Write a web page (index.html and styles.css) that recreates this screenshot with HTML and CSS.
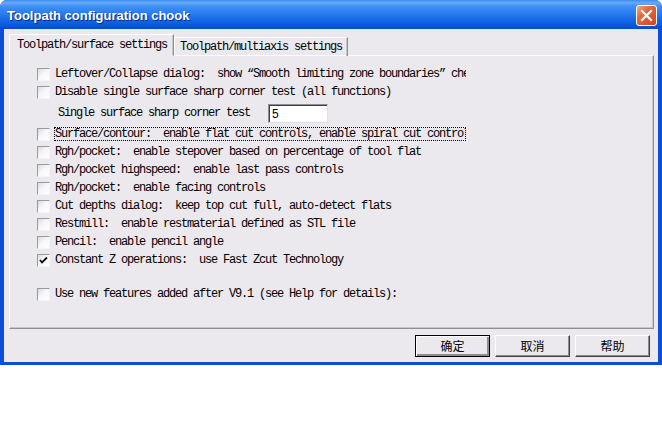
FILE: index.html
```html
<!DOCTYPE html>
<html>
<head>
<meta charset="utf-8">
<link rel="stylesheet" href="styles.css">
</head>
<body>
<div class="window">
  <div class="titlebar">
    <span class="title">Toolpath configuration chook</span>
    <span class="close">
      <svg width="21" height="21" viewBox="0 0 21 21"><path d="M6 6 L15 15 M15 6 L6 15" stroke="#fff" stroke-width="2.2" stroke-linecap="square"/></svg>
    </span>
  </div>
  <div class="body">
    <div class="tabs">
      <div class="tab active">Toolpath/surface settings</div>
      <div class="tab">Toolpath/multiaxis settings</div>
    </div>
    <div class="panel">
      <div class="row"><span class="cb"></span><span class="lbl">Leftover/Collapse dialog:  show “Smooth limiting zone boundaries” check box</span></div>
      <div class="row"><span class="cb"></span><span class="lbl">Disable single surface sharp corner test (all functions)</span></div>
      <div class="row inputrow"><span class="sub">Single surface sharp corner test</span><span class="field">5</span></div>
      <div class="row"><span class="cb"></span><span class="lbl focus">Surface/contour:  enable flat cut controls, enable spiral cut controls</span></div>
      <div class="row"><span class="cb"></span><span class="lbl">Rgh/pocket:  enable stepover based on percentage of tool flat</span></div>
      <div class="row"><span class="cb"></span><span class="lbl">Rgh/pocket highspeed:  enable last pass controls</span></div>
      <div class="row"><span class="cb"></span><span class="lbl">Rgh/pocket:  enable facing controls</span></div>
      <div class="row"><span class="cb"></span><span class="lbl">Cut depths dialog:  keep top cut full, auto-detect flats</span></div>
      <div class="row"><span class="cb"></span><span class="lbl">Restmill:  enable restmaterial defined as STL file</span></div>
      <div class="row"><span class="cb"></span><span class="lbl">Pencil:  enable pencil angle</span></div>
      <div class="row"><span class="cb checked"><svg width="11" height="11" viewBox="0 0 11 11"><path d="M2 5 L4 7.5 L9 2.5" fill="none" stroke="#000" stroke-width="1.8"/></svg></span><span class="lbl">Constant Z operations:  use Fast Zcut Technology</span></div>
      <div class="row spaced"><span class="cb"></span><span class="lbl">Use new features added after V9.1 (see Help for details):</span></div>
    </div>
    <div class="buttons">
      <button class="btn default">确定</button>
      <button class="btn">取消</button>
      <button class="btn">帮助</button>
    </div>
  </div>
</div>
</body>
</html>
```
FILE: styles.css
```css
html, body {
  margin: 0;
  padding: 0;
  background: #fff;
}
.window {
  width: 662px;
  height: 365px;
  display: flex;
  flex-direction: column;
  background: #0a4fd8;
  border-radius: 7px 7px 0 0;
  overflow: hidden;
}
.titlebar {
  height: 29px;
  flex: none;
  display: flex;
  align-items: center;
  justify-content: space-between;
  padding: 0 5px 0 7px;
  background: linear-gradient(to bottom, #3d8cf4 0%, #69a9f7 10%, #3f8ff5 22%, #2a7ef0 45%, #1466e6 70%, #0a58dd 88%, #0748c8 100%);
}
.title {
  font-family: "Liberation Sans", Arial, sans-serif;
  font-weight: bold;
  font-size: 13px;
  color: #fff;
  text-shadow: 1px 1px 0 #0a2a86;
  margin-top: 1px;
}
.close {
  width: 21px;
  height: 21px;
  box-sizing: border-box;
  border: 1px solid #fff;
  border-radius: 3px;
  background: linear-gradient(135deg, #f4a888 0%, #e6683f 35%, #d2441e 100%);
  display: flex;
  margin-top: 1px;
}
.close svg { display: block; margin: -1px; }
.body {
  flex: 1;
  min-height: 0;
  margin: 0 4px 3px 4px;
  background: #ebe9ed;
  padding: 5px 4px 0 5px;
  display: flex;
  flex-direction: column;
  font-family: "Liberation Mono", "Courier New", monospace;
  font-size: 12px;
  letter-spacing: -1.2px;
  color: #000;
}
.tabs {
  display: flex;
  align-items: flex-end;
  height: 22px;
  flex: none;
  position: relative;
  z-index: 1;
  margin-bottom: -1px;
}
.tab {
  height: 18px;
  line-height: 18px;
  padding: 0 5px 0 5px;
  border-top: 1px solid #fff;
  border-left: 1px solid #fff;
  border-right: 1px solid #8e8d92;
  box-shadow: inset -1px 0 0 #c8c6cc;
  white-space: pre;
}
.tab.active {
  height: 20px;
  line-height: 20px;
  padding: 0 6px 0 7px;
  background: #ebe9ed;
  border-bottom: 1px solid #ebe9ed;
}
.panel {
  height: 274px;
  box-sizing: border-box;
  flex: none;
  border-top: 1px solid #fff;
  border-left: 1px solid #fff;
  border-right: 1px solid #8e8d92;
  border-bottom: 1px solid #8e8d92;
  box-shadow: inset -1px -1px 0 #c8c6cc;
  padding: 9px 0 0 27px;
  display: flex;
  flex-direction: column;
}
.row {
  height: 18px;
  flex: none;
  display: flex;
  align-items: center;
}
.row.inputrow {
  height: 24px;
}
.row.spaced {
  margin-top: 16px;
}
.cb {
  width: 13px;
  height: 13px;
  box-sizing: border-box;
  flex: none;
  border-top: 1px solid #9a99a0;
  border-left: 1px solid #9a99a0;
  border-right: 1px solid #f4f4f6;
  border-bottom: 1px solid #f4f4f6;
  background: linear-gradient(135deg, #dcdce0 0%, #f6f6f8 45%, #ffffff 100%);
  margin-right: 5px;
  display: flex;
  align-items: center;
  justify-content: center;
}
.cb svg { display: block; }
.lbl {
  width: 412px;
  overflow: hidden;
  white-space: pre;
  line-height: 14px;
  height: 14px;
  box-sizing: border-box;
  padding-left: 1px;
  margin-left: -1px;
}
.lbl.focus {
  outline: 1px dotted #000;
  outline-offset: -1px;
}
.sub {
  margin-left: 21px;
  width: 210px;
  white-space: pre;
}
.field {
  width: 60px;
  height: 19px;
  box-sizing: border-box;
  background: #fff;
  border-top: 1px solid #8e8d92;
  border-left: 1px solid #8e8d92;
  border-right: 1px solid #e0dfe3;
  border-bottom: 1px solid #e0dfe3;
  box-shadow: inset 1px 1px 0 #404040;
  padding: 2px 0 0 3px;
  font-family: "Liberation Sans", Arial, sans-serif;
  font-size: 12px;
  letter-spacing: 0;
  line-height: 14px;
}
.buttons {
  display: flex;
  justify-content: flex-end;
  gap: 5px;
  padding: 6px 4px 0 0;
}
.btn {
  width: 75px;
  height: 22px;
  box-sizing: border-box;
  margin: 0;
  padding: 0;
  background: #ebe9ed;
  border-top: 1px solid #fff;
  border-left: 1px solid #fff;
  border-right: 1px solid #404040;
  border-bottom: 1px solid #404040;
  box-shadow: inset -1px -1px 0 #8e8d92;
  font-family: "Noto Sans CJK SC", sans-serif;
  font-size: 12px;
  letter-spacing: 0;
  color: #000;
  line-height: 18px;
}
.btn.default {
  border: 1px solid #000;
  box-shadow: inset 1px 1px 0 #fff, inset -2px -2px 0 #8e8d92;
}
```
